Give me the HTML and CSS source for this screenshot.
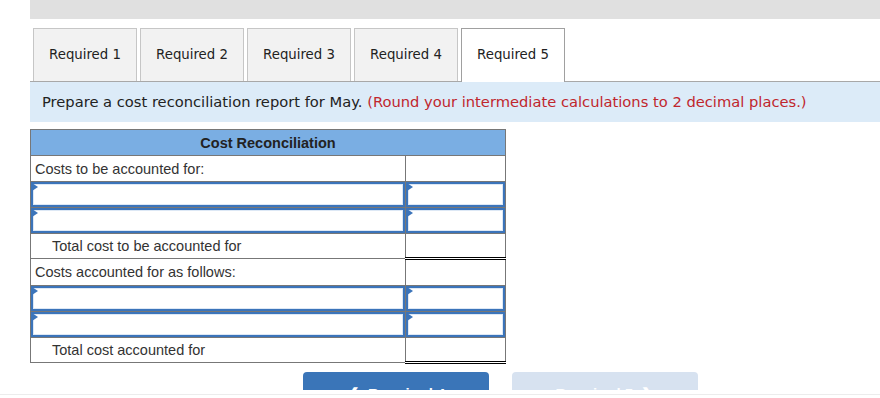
FILE: index.html
```html
<!DOCTYPE html>
<html lang="en">
<head>
    <meta charset="UTF-8">
    <title>Cost Reconciliation</title>
    <link rel="stylesheet" href="styles.css">
</head>
<body>
    <div class="topbar"></div>
    <div class="tabs">
        <div class="tab">Required 1</div>
        <div class="tab">Required 2</div>
        <div class="tab">Required 3</div>
        <div class="tab">Required 4</div>
        <div class="tab active">Required 5</div>
    </div>
    <div class="instructions">
        Prepare a cost reconciliation report for May. <span class="note">(Round your intermediate calculations to 2 decimal places.)</span>
    </div>
    <table class="report">
        <colgroup>
            <col class="col-label">
            <col class="col-value">
        </colgroup>
        <tr>
            <th colspan="2">Cost Reconciliation</th>
        </tr>
        <tr>
            <td class="label">Costs to be accounted for:</td>
            <td class="value"></td>
        </tr>
        <tr class="entry">
            <td><div class="field"></div></td>
            <td><div class="field"></div></td>
        </tr>
        <tr class="entry">
            <td><div class="field"></div></td>
            <td><div class="field"></div></td>
        </tr>
        <tr class="total">
            <td class="label indent">Total cost to be accounted for</td>
            <td class="value"></td>
        </tr>
        <tr>
            <td class="label">Costs accounted for as follows:</td>
            <td class="value"></td>
        </tr>
        <tr class="entry">
            <td><div class="field"></div></td>
            <td><div class="field"></div></td>
        </tr>
        <tr class="entry">
            <td><div class="field"></div></td>
            <td><div class="field"></div></td>
        </tr>
        <tr class="total">
            <td class="label indent">Total cost accounted for</td>
            <td class="value"></td>
        </tr>
    </table>
    <div class="nav">
        <button class="prev">&#10094;&nbsp;&nbsp;Required 4</button>
        <button class="next">Required 5&nbsp;&nbsp;&#10095;</button>
    </div>
    <div class="page-edge"></div>
</body>
</html>
```

FILE: styles.css
```css
body {
    margin: 0;
    padding: 0 0 0 30px;
    background-color: #fff;
    color: #222;
    overflow: hidden;
}

.topbar {
    height: 19px;
    background-color: #e0e0e0;
}

.tabs {
    display: flex;
    gap: 3px;
    margin-top: 9px;
    padding-left: 3px;
    border-bottom: 1px solid #a8a8a8;
}

.tab {
    width: 102px;
    height: 52px;
    line-height: 52px;
    text-align: center;
    font-family: "DejaVu Sans", sans-serif;
    font-size: 13.3px;
    color: #222;
    background-color: #f2f2f2;
    border: 1px solid #c6c6c6;
    border-bottom: none;
}

.tab.active {
    background-color: #fff;
    border-color: #a0a0a0;
    margin-bottom: -1px;
    height: 53px;
}

.instructions {
    height: 40px;
    line-height: 40px;
    padding-left: 12px;
    background-color: #dcebf8;
    font-family: "DejaVu Sans", sans-serif;
    font-size: 14.7px;
    color: #222;
}

.note {
    color: #c0262d;
}

.report {
    margin-top: 7px;
    width: 475px;
    table-layout: fixed;
    border-collapse: collapse;
    font-family: "Liberation Sans", Arial, sans-serif;
    font-size: 14.5px;
    color: #333;
}

.col-label {
    width: 375px;
}

.col-value {
    width: 100px;
}

.report th {
    height: 25px;
    padding: 0;
    background-color: #7aaee3;
    border: 1px solid #777;
    font-size: 14.5px;
    color: #222;
}

.report td {
    height: 25px;
    padding: 0;
    border: 1px solid #777;
}

.report .label {
    padding-left: 4px;
}

.report .indent {
    padding-left: 21px;
}

.report .total td {
    height: 23px;
}

.report .total .value {
    border-top: 1px solid #000;
    border-bottom: 3px double #000;
}

.entry td {
    position: relative;
}

.field {
    height: 21px;
    border: 2px solid #3b74ba;
    box-shadow: inset 0 0 0 1px #dde8f5;
}

.field::before {
    content: "";
    position: absolute;
    left: 1px;
    top: 1px;
    border-top: 4px solid transparent;
    border-bottom: 4px solid transparent;
    border-left: 6px solid #3b74ba;
}

.nav {
    display: flex;
    gap: 23px;
    margin: 8px 0 0 273px;
}

.nav button {
    width: 186px;
    height: 36px;
    padding: 7px 0 0;
    line-height: 18px;
    border: none;
    border-radius: 4px;
    font-family: "Liberation Sans", Arial, sans-serif;
    font-size: 15px;
    font-weight: bold;
    color: #fff;
    text-align: center;
    vertical-align: top;
}

.prev {
    background-color: #3a75b8;
}

.next {
    background-color: #d7e2f0;
}

.page-edge {
    position: fixed;
    left: 0;
    right: 0;
    bottom: 0;
    height: 3px;
    background-color: #fff;
    border-top: 1px solid #ececec;
    box-shadow: 0 -4px 0 #fff;
}
```
